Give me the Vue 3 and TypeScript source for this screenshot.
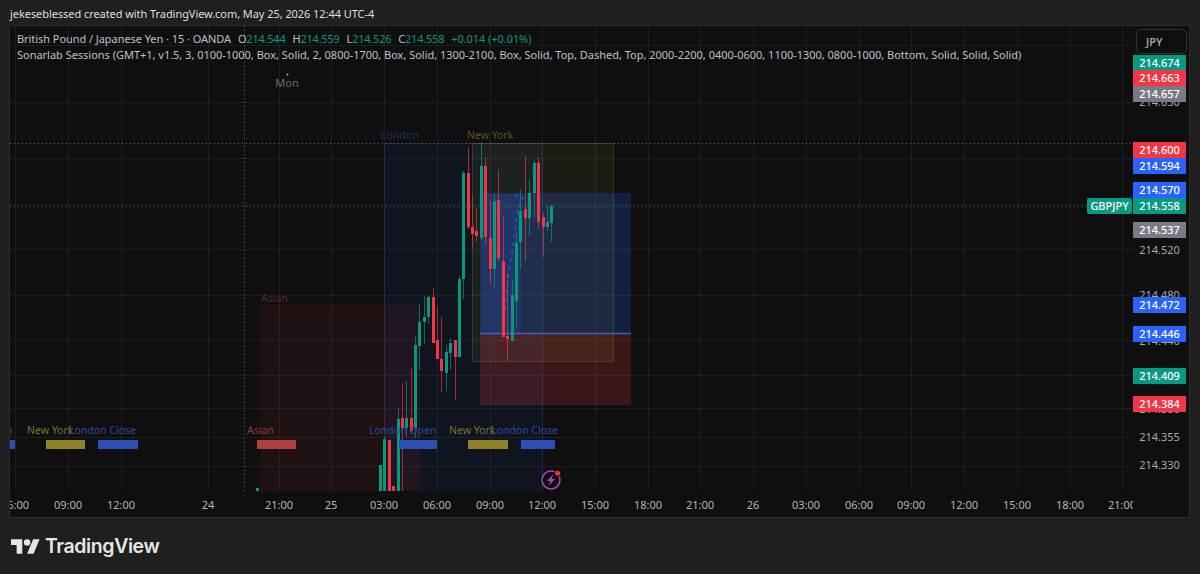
<script setup lang="ts">
type Candle = [x: number, up: boolean, wickTop: number, wickBottom: number, bodyTop: number, bodyBottom: number];
type Badge = { price: string; top: number; color: string };

const up = true;
const down = false;

const candles: Candle[] = [
    [257, up, 488, 491, 488, 491],
    [380, up, 465, 491, 465, 491],
    [384, up, 437, 491, 439, 491],
    [389, down, 440, 491, 440, 491],
    [393, down, 486, 491, 486, 491],
    [398, up, 408, 491, 419, 491],
    [402, down, 383, 491, 418, 428],
    [406, up, 381, 437, 418, 428],
    [411, down, 368, 433, 418, 431],
    [415, up, 336, 438, 345, 428],
    [419, up, 304, 370, 322, 346],
    [424, up, 296, 344, 317, 322],
    [428, up, 296, 324, 297, 317],
    [433, down, 288, 343, 297, 343],
    [437, down, 306, 359, 340, 359],
    [441, down, 317, 392, 359, 371],
    [446, up, 345, 391, 352, 373],
    [450, up, 338, 370, 343, 353],
    [455, down, 340, 400, 340, 357],
    [459, up, 276, 357, 279, 357],
    [463, up, 171, 299, 173, 279],
    [468, down, 147, 229, 173, 227],
    [472, down, 194, 249, 227, 234],
    [476, down, 208, 242, 231, 236],
    [481, up, 142, 240, 166, 238],
    [485, down, 157, 245, 166, 237],
    [490, down, 200, 283, 238, 269],
    [494, up, 194, 288, 201, 269],
    [498, down, 170, 261, 200, 258],
    [503, down, 217, 337, 261, 337],
    [507, down, 274, 361, 336, 339],
    [512, up, 279, 341, 295, 341],
    [516, up, 231, 328, 243, 301],
    [520, up, 190, 269, 211, 242],
    [525, down, 156, 261, 209, 218],
    [529, up, 179, 236, 193, 218],
    [534, up, 160, 217, 163, 193],
    [538, down, 157, 229, 163, 222],
    [543, down, 213, 257, 217, 227],
    [547, up, 205, 231, 222, 227],
    [551, up, 205, 242, 206, 223],
];

const verticals = [15, 68, 121, 208, 279, 331, 384, 437, 490, 542, 595, 648, 700, 753, 806, 859, 911, 964, 1017, 1070, 1122];
const horizontals = [45, 102, 158, 204, 249, 295, 340, 375, 408, 437, 466];

const timeTicks: [string, number][] = [
    ['06:00', 15],
    ['09:00', 68],
    ['12:00', 121],
    ['24', 208],
    ['21:00', 279],
    ['25', 331],
    ['03:00', 384],
    ['06:00', 437],
    ['09:00', 490],
    ['12:00', 542],
    ['15:00', 595],
    ['18:00', 648],
    ['21:00', 700],
    ['26', 753],
    ['03:00', 806],
    ['06:00', 859],
    ['09:00', 911],
    ['12:00', 964],
    ['15:00', 1017],
    ['18:00', 1070],
    ['21:00', 1122],
];

const axisPrices: [string, number][] = [
    ['214.650', 102],
    ['214.520', 250],
    ['214.480', 295],
    ['214.440', 341],
    ['214.380', 409],
    ['214.355', 437],
    ['214.330', 465],
];

const GREEN = '#089981';
const RED = '#f23645';
const BLUE = '#2962ff';
const GREY = '#787b86';

const badges: Badge[] = [
    { price: '214.674', top: 55, color: GREEN },
    { price: '214.663', top: 70, color: RED },
    { price: '214.657', top: 86, color: GREY },
    { price: '214.600', top: 142, color: RED },
    { price: '214.594', top: 158, color: BLUE },
    { price: '214.570', top: 182, color: BLUE },
    { price: '214.558', top: 198, color: GREEN },
    { price: '214.537', top: 222, color: GREY },
    { price: '214.472', top: 297, color: BLUE },
    { price: '214.446', top: 326, color: BLUE },
    { price: '214.409', top: 368, color: GREEN },
    { price: '214.384', top: 396, color: RED },
];

const sessionBars: [number, number, string][] = [
    [5, 10, '#2a4fb5'],
    [46, 39, '#8f8228'],
    [98, 40, '#2a4fb5'],
    [257, 39, '#b04040'],
    [399, 38, '#2a4fb5'],
    [468, 40, '#8f8228'],
    [521, 34, '#2a4fb5'],
];
</script>

<template>
    <div class="page">
        <header class="caption">jekeseblessed created with TradingView.com, May 25, 2026 12:44 UTC-4</header>
        <section class="chart">
            <div class="plot">
                <svg class="canvas" viewBox="10 26 1123 465" width="1123" height="465">
                    <g class="grid">
                        <line v-for="x in verticals" :key="'v' + x" :x1="x + 0.5" :x2="x + 0.5" y1="26" y2="491" />
                        <line v-for="y in horizontals" :key="'h' + y" x1="10" x2="1133" :y1="y + 0.5" :y2="y + 0.5" />
                    </g>

                    <rect class="box london" x="384.5" y="143.5" width="158" height="348" />
                    <rect class="box asian" x="261.5" y="304.5" width="158" height="187" />
                    <rect class="box newyork" x="472.5" y="143.5" width="141" height="218" />
                    <rect class="box target" x="480.5" y="193.5" width="150" height="140" />
                    <rect class="box stop" x="480.5" y="334.5" width="150" height="70" />
                    <rect class="patch" x="481" y="194" width="40" height="139" />
                    <line class="entry" x1="480" x2="631" y1="333.5" y2="333.5" />
                    <polyline class="curve" points="515,196 520,194 523,198 518,208 516,222 514,240 511,258 509,272 507,290 505,312" />

                    <line class="cross" x1="244.5" x2="244.5" y1="26" y2="491" />
                    <line class="cross" x1="10" x2="1133" y1="143.5" y2="143.5" />
                    <line class="last-line" x1="10" x2="1087" y1="206.5" y2="206.5" />

                    <g v-for="c in candles" :key="c[0]" :fill="c[1] ? GREEN : RED">
                        <rect class="wick" :x="c[0]" :y="c[2]" width="1" :height="c[3] - c[2]" />
                        <rect :x="c[0] - 1" :y="c[4]" width="3" :height="c[5] - c[4]" />
                    </g>

                    <text class="session t-london" x="381" y="139">London</text>
                    <text class="session t-newyork" x="467" y="139">New York</text>
                    <text class="session t-asian" x="261" y="302">Asian</text>

                    <rect v-for="b in sessionBars" :key="b[0]" :x="b[0]" y="440" :width="b[1]" height="9" :fill="b[2]" />
                    <text class="tag c-blue" x="-55" y="434">London Open</text>
                    <text class="tag c-yellow" x="27" y="434">New York</text>
                    <text class="tag c-blue" x="69" y="434">London Close</text>
                    <text class="tag c-red" x="247" y="434">Asian</text>
                    <text class="tag c-blue" x="369" y="434">London Open</text>
                    <text class="tag c-yellow" x="449" y="434">New York</text>
                    <text class="tag c-blue" x="491" y="434">London Close</text>

                    <circle class="mon-dot" cx="287.5" cy="74.5" r="1" />
                    <text class="mon" x="287" y="87">Mon</text>

                    <g class="bolt">
                        <circle cx="551" cy="480" r="9" />
                        <path d="M553.5 474 L547 481 H550.5 L548.5 486 L555 479 H551.5 Z" />
                    </g>
                    <circle class="bolt-dot" cx="557.7" cy="473.3" r="3" />
                </svg>

                <div class="legend">
                    <div class="legend-row quote">
                        <span>British Pound / Japanese Yen · 15 · OANDA</span>
                        <span class="ohlc">O<b>214.544</b></span>
                        <span class="ohlc">H<b>214.559</b></span>
                        <span class="ohlc">L<b>214.526</b></span>
                        <span class="ohlc">C<b>214.558</b></span>
                        <b>+0.014 (+0.01%)</b>
                    </div>
                    <div class="legend-row">Sonarlab Sessions (GMT+1, v1.5, 3, 0100-1000, Box, Solid, 2, 0800-1700, Box, Solid, 1300-2100, Box, Solid, Top, Dashed, Top, 2000-2200, 0400-0600, 1100-1300, 0800-1000, Bottom, Solid, Solid, Solid)</div>
                </div>
            </div>

            <aside class="axis">
                <button class="currency">JPY</button>
                <span v-for="p in axisPrices" :key="p[0]" class="axis-price" :style="{ top: p[1] - 34 + 'px' }">{{ p[0] }}</span>
                <span
                    v-for="b in badges"
                    :key="b.price"
                    class="badge"
                    :style="{ top: b.top - 26 + 'px', background: b.color }"
                >{{ b.price }}</span>
                <span class="symbol">GBPJPY</span>
            </aside>

            <div class="times">
                <span v-for="t in timeTicks" :key="t[1]" class="time" :style="{ left: t[1] - 10 + 'px' }">{{ t[0] }}</span>
            </div>
        </section>
        <footer class="brand">
            <svg class="brand-logo" viewBox="0 0 36 18" width="29" height="15">
                <path d="M14 18H7V7H0V0h14v18zM28 18h-8L27.5 0h8L28 18z" />
                <circle cx="20" cy="4" r="4" />
            </svg>
            <span class="brand-name">TradingView</span>
        </footer>
    </div>
</template>

<style scoped>
.page {
    width: 1200px;
    height: 574px;
    background: #1f1f1f;
    display: flex;
    flex-direction: column;
    overflow: hidden;
    font-family: "Noto Sans", sans-serif;
}

.caption {
    height: 25px;
    padding: 6px 0 0 10px;
    box-sizing: border-box;
    font-size: 11px;
    line-height: 15px;
    letter-spacing: -0.06px;
    color: #dcdfe6;
}

.chart {
    position: relative;
    margin-left: 9px;
    width: 1181px;
    height: 493px;
    box-sizing: border-box;
    border: 1px solid #2b2b2b;
    background: #0f0f0f;
    display: grid;
    grid-template-columns: 1123px 1fr;
    grid-template-rows: 465px 1fr;
}

.plot {
    position: relative;
    overflow: hidden;
}

.canvas {
    display: block;
}

.grid line {
    stroke: #1e1e1e;
    stroke-width: 1;
}

.box {
    stroke-width: 1;
}

.london {
    fill: rgba(41, 98, 255, 0.07);
    stroke: rgba(41, 98, 255, 0.2);
}

.asian {
    fill: rgba(242, 54, 69, 0.07);
    stroke: rgba(242, 54, 69, 0.08);
}

.newyork {
    fill: rgba(200, 190, 60, 0.08);
    stroke: rgba(200, 190, 60, 0.2);
}

.target {
    fill: rgba(41, 98, 255, 0.2);
    stroke: rgba(41, 98, 255, 0.12);
}

.stop {
    fill: rgba(242, 54, 69, 0.2);
    stroke: rgba(242, 54, 69, 0.12);
}

.patch {
    fill: rgba(41, 98, 255, 0.14);
}

.entry {
    stroke: #3f62c4;
    stroke-width: 1.5;
}

.curve {
    fill: none;
    stroke: #2a55c8;
    stroke-width: 1.5;
    stroke-dasharray: 4 4;
}

.cross {
    stroke: #6f6f6f;
    stroke-dasharray: 1 3;
}

.last-line {
    stroke: #089981;
    stroke-dasharray: 1 3;
}

.wick {
    opacity: 0.65;
}

.session {
    font-size: 10.5px;
}

.t-london {
    fill: #1f3060;
}

.t-newyork {
    fill: #5c5420;
}

.t-asian {
    fill: #5a2a2a;
}

.tag {
    font-size: 10.5px;
}

.c-blue {
    fill: #2f4a99;
}

.c-yellow {
    fill: #7a7430;
}

.c-red {
    fill: #8f3a3a;
}

.mon-dot {
    fill: #b2b5be;
}

.mon {
    fill: #6e6e6e;
    font-size: 11px;
    text-anchor: middle;
}

.bolt circle {
    fill: none;
    stroke: #ab47bc;
    stroke-width: 1.5;
}

.bolt path {
    fill: #ab47bc;
}

.bolt-dot {
    fill: #f23645;
    stroke: #0f0f0f;
    stroke-width: 1;
}

.legend {
    position: absolute;
    left: 7px;
    top: 5px;
    font-size: 11px;
    line-height: 16px;
    letter-spacing: -0.02px;
    color: #bdc0c8;
    white-space: nowrap;
}

.legend-row {
    display: flex;
    gap: 7px;
}

.quote {
    letter-spacing: -0.06px;
}

.ohlc {
    letter-spacing: -0.22px;
}

.legend-row b {
    font-weight: 400;
    color: #089981;
}

.axis {
    position: relative;
    grid-row: 1 / 3;
    grid-column: 2;
}

.currency {
    position: absolute;
    left: 3px;
    top: 3px;
    width: 51px;
    height: 25px;
    box-sizing: border-box;
    padding: 0 0 0 9px;
    text-align: left;
    background: #0f0f0f;
    border: 1px solid #333;
    border-radius: 5px;
    color: #b2b5be;
    font: 500 11px "Noto Sans", sans-serif;
}

.axis-price {
    position: absolute;
    left: 0;
    width: 53px;
    text-align: center;
    font-size: 11px;
    line-height: 16px;
    color: #a8a8a8;
}

.badge {
    position: absolute;
    left: 0;
    width: 53px;
    height: 16px;
    text-align: center;
    font-size: 11px;
    font-weight: 500;
    line-height: 16px;
    color: #fff;
}

.symbol {
    position: absolute;
    right: 100%;
    top: 172px;
    width: 45px;
    margin-right: 1px;
    height: 16px;
    text-align: center;
    font-size: 11px;
    font-weight: 500;
    line-height: 16px;
    color: #fff;
    background: #089981;
    border-radius: 2px;
}

.times {
    position: relative;
    overflow: hidden;
    grid-row: 2;
    grid-column: 1;
}

.time {
    position: absolute;
    top: 6px;
    transform: translateX(-50%);
    font-size: 11px;
    line-height: 15px;
    color: #b2b5be;
}

.brand {
    flex: 1;
    display: flex;
    align-items: center;
    gap: 5px;
    padding: 0 0 0 11px;
}

.brand-logo {
    fill: #e6e6e6;
}

.brand-name {
    font-family: Inter, sans-serif;
    font-weight: 600;
    font-size: 19.5px;
    color: #e6e6e6;
    letter-spacing: -0.4px;
}
</style>
